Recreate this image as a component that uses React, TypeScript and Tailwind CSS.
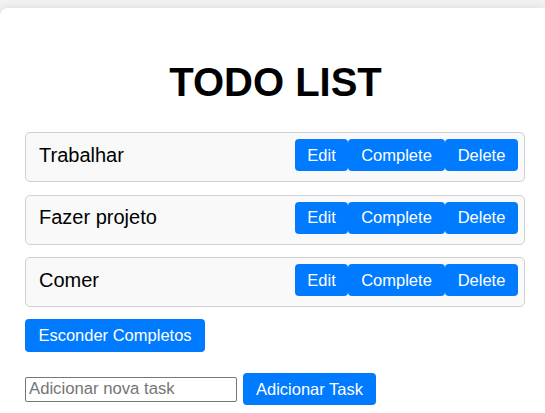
import React from "react";

const tasks = ["Trabalhar", "Fazer projeto", "Comer"];

function Btn({ w, children }: { w: string; children: React.ReactNode }) {
  return (
    <button
      className={`${w} h-[32px] rounded-[4px] bg-[#007bff] text-white text-[16.5px] leading-none flex items-center justify-center`}
    >
      {children}
    </button>
  );
}

export default function App() {
  return (
    <div
      className="w-full h-[413px] overflow-hidden bg-[#f2f2f2] pt-[8px]"
      style={{ fontFamily: '"Liberation Sans", Arial, sans-serif' }}
    >
      <div className="w-full h-[420px] bg-white rounded-tl-[8px] shadow-[0_0_10px_rgba(0,0,0,0.1)] pl-[25px] pt-[24px]">
        <h1 className="text-[40px] font-bold text-black text-center leading-[46px] my-[27px] w-[501px]">
          TODO LIST
        </h1>
        <div className="w-[500px] flex flex-col gap-[12.5px]">
          {tasks.map((t) => (
            <div
              key={t}
              className="h-[50px] border border-[#d0d0d0] rounded-[5px] bg-[#f9f9f9] flex items-center justify-between pl-[13px] pr-[6px] pt-[6px] pb-[10px]"
            >
              <span className="text-[20px] text-black leading-[23px]">{t}</span>
              <div className="flex">
                <Btn w="w-[53px]">Edit</Btn>
                <Btn w="w-[97px]">Complete</Btn>
                <Btn w="w-[73px]">Delete</Btn>
              </div>
            </div>
          ))}
        </div>
        <button className="mt-[12px] w-[180px] h-[33px] rounded-[4px] bg-[#007bff] text-white text-[16.5px] flex items-center justify-center">
          Esconder Completos
        </button>
        <div className="flex items-center mt-[21px]">
          <input
            placeholder="Adicionar nova task"
            className="w-[212px] h-[25px] border border-[#767676] rounded-[2px] px-[3px] text-[16.7px] text-black placeholder:text-[#757575] outline-none"
          />
          <button className="ml-[6px] w-[133px] h-[32px] rounded-[4px] bg-[#007bff] text-white text-[16.5px] flex items-center justify-center">
            Adicionar Task
          </button>
        </div>
      </div>
    </div>
  );
}
